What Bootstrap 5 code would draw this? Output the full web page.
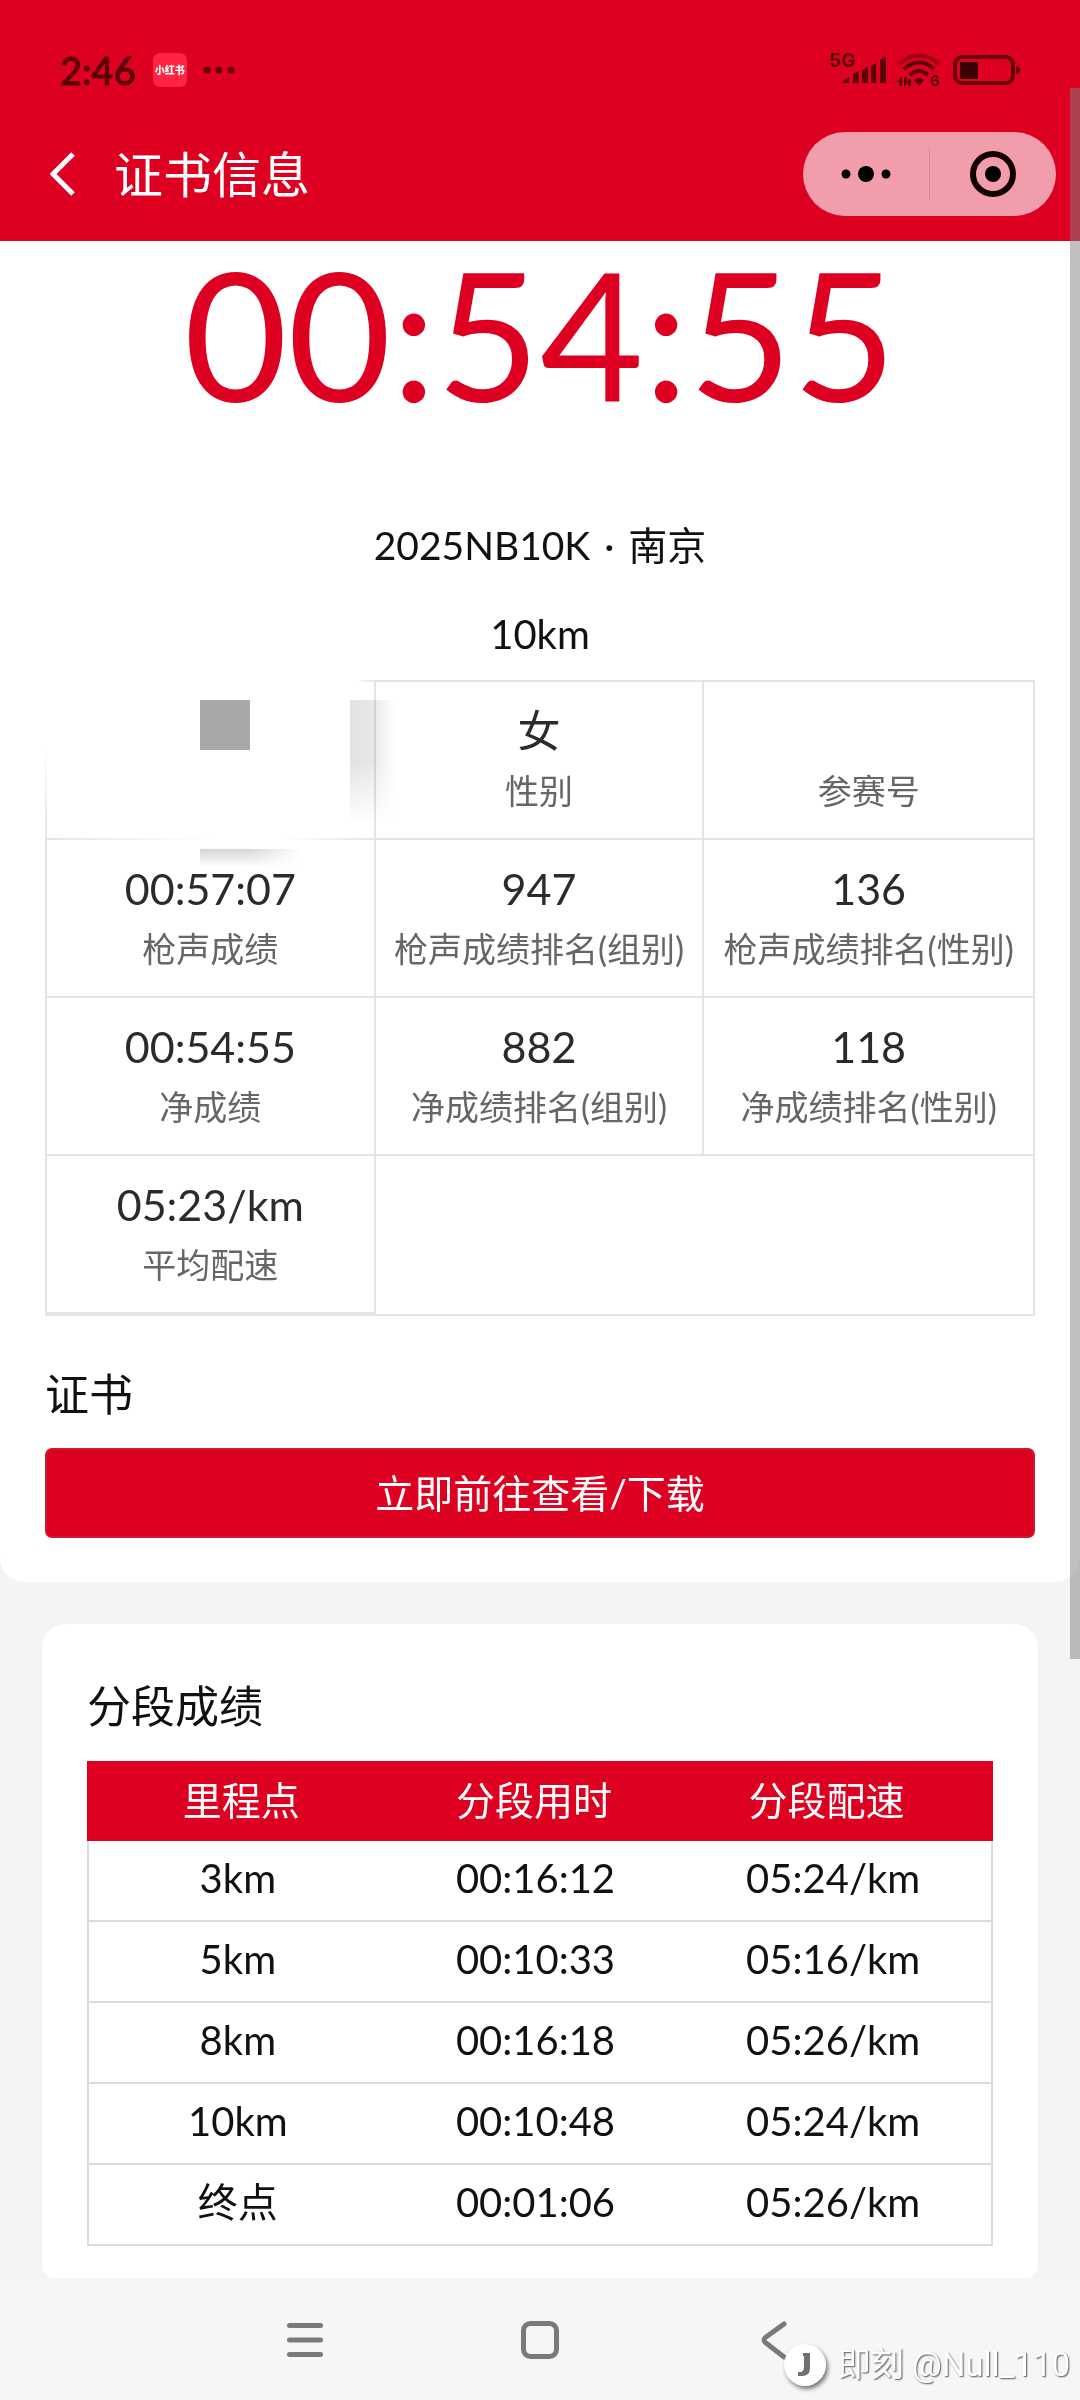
<!DOCTYPE html>
<html lang="zh-CN">
<head>
<meta charset="utf-8">
<meta name="viewport" content="width=device-width, initial-scale=1">
<title>证书信息</title>
<link rel="stylesheet" href="https://cdn.jsdelivr.net/npm/bootstrap@5.3.0/dist/css/bootstrap.min.css">
<style>
  :root { --brand: #de0021; --rule: #e4e4e4; --split-rule: #dcdcdc; }
  body { font-family: Lato, "Noto Sans CJK SC", sans-serif; background: #f4f4f4; color: #111; line-height: 60px; font-size: 40px; overflow-x: hidden; }
  svg { display: block; flex: none; }
  .top-area { background: var(--brand); height: 241px; }
  .status-bar { padding: 40px 58px 0 60px; height: 100px; color: #5c0008; }
  .status-time { font-size: 38px; font-weight: 500; -webkit-text-stroke: 1px #5c0008; margin-right: 17px; }
  .status-svg-text { font-family: Inter, sans-serif; font-weight: 700; fill: #5c0008; }
  .app-icon { width: 34px; height: 34px; border-radius: 7px; background: #ff2442; color: #fff; font-size: 10px; line-height: 34px; font-weight: 900; text-align: center; white-space: nowrap; }
  .title-bar { height: 148px; padding: 0 24px 0 50px; }
  .title-bar h1 { font-size: 49px; line-height: 60px; font-weight: 400; color: #fff; margin: 0 0 0 39px; }
  .icon-btn { border: 0; background: none; padding: 0; }
  .capsule { width: 253px; height: 84px; border-radius: 42px; background: #f29dab; }
  .capsule .icon-btn { flex: 1; height: 100%; }
  .capsule-line { width: 1px; height: 52px; background: #dc8595; }
  .result-panel { background: #fff; border-radius: 0 0 24px 24px; padding: 0 45px 44px; }
  .finish-time { color: var(--brand); font-size: 179px; line-height: 184px; }
  .race-name { font-size: 39px; margin-top: 90px; }
  .race-type { margin-top: 29px; }
  .stat-grid { border: 2px solid var(--rule); margin-top: 16px; }
  .stat-cell { height: 158px; padding-top: 19px; border-right: 2px solid var(--rule); border-bottom: 2px solid var(--rule); text-align: center; white-space: nowrap; }
  .stat-cell.edge { border-right: 0; }
  .stat-value { font-size: 43px; color: #2b2b2b; height: 60px; }
  .stat-label { font-size: 34px; color: #666; height: 60px; }
  .section-title { font-size: 44px; line-height: 60px; font-weight: 400; margin: 0; color: #111; }
  .btn-brand { background: var(--brand); border: 2px solid #cc1a30; border-radius: 7px; color: #fff; font-size: 39px; line-height: 60px; padding: 13px 0; }
  .btn-brand:hover { background: #c4001d; color: #fff; }
  .split-card { border-radius: 24px 24px 12px 12px; background: #fff; margin: 42px 42px 0; padding: 52px 45px 32px; }
  .split-table { border: 2px solid var(--split-rule); border-top: 0; margin-top: 25px; }
  .split-table th, .split-table td { width: 33%; text-align: center; font-weight: 400; }
  .split-table th { width: 33.33%; }
  .split-table thead tr { background: var(--brand); color: #fff; font-size: 39px; padding: 8px 20px 10px 8px; margin: 0 -2px; }
  .split-table tbody tr { height: 81px; padding: 6px 0 13px; border-bottom: 2px solid var(--split-rule); }
  .split-table tbody tr:last-child { height: 79px; border-bottom: 0; }
  .sys-nav { background: #f6f6f6; height: 124px; gap: 187px; }
  .veil, .veil-block, .veil-right, .veil-below { position: absolute; }
  .veil { left: -2px; top: -2px; width: 330px; height: 160px; background: linear-gradient(to bottom, #fff 40%, rgba(255,255,255,0)) left / 4px 100% no-repeat, linear-gradient(to right, #fff 94%, rgba(255,255,255,0)) top / 100% 4px no-repeat, linear-gradient(to right, rgba(255,255,255,0), #fff 50%, #fff 72%, rgba(255,255,255,0)) bottom / 100% 2px no-repeat; }
  .veil-block { left: 153px; top: 18px; width: 50px; height: 50px; background: #a8a8a8; }
  .veil-right { left: 303px; top: 18px; width: 46px; height: 122px; background: linear-gradient(to bottom, rgba(255,255,255,0) 50%, #fff), linear-gradient(to right, #e2e2e2, #e8e8e8 50%, #fff); mix-blend-mode: multiply; }
  .veil-below { left: 153px; top: 167px; width: 100px; height: 18px; background: linear-gradient(to bottom, rgba(255,255,255,0), #fff), linear-gradient(to right, #d4d4d4, #d6d6d6 50%, #fff); }
  .scroll-thumb { position: absolute; right: 0; top: 88px; width: 10px; height: 1571px; background: rgba(128,128,128,.5); }
  .watermark { position: absolute; right: 10px; bottom: 10px; color: #fff; font: 33px/54px Roboto, "Noto Sans CJK SC", sans-serif; text-shadow: 1px 1px 1px #777, 1px 1px 2px #999; }
  .watermark svg { filter: drop-shadow(2px 3px 2px #777); margin-right: 11px; }
</style>
<script src="https://cdn.jsdelivr.net/npm/bootstrap@5.3.0/dist/js/bootstrap.bundle.min.js"></script>
</head>
<body>
<div class="position-relative">
  <header class="top-area">
    <div class="status-bar d-flex align-items-center">
      <span class="status-time">2:46</span>
      <span class="app-icon">小红书</span>
      <svg class="ms-3" width="34" height="8" fill="#6a0008"><circle cx="4" cy="4" r="3.5"/><circle cx="16" cy="4" r="3.5"/><circle cx="28" cy="4" r="3.5"/></svg>
      <svg class="ms-auto" width="194" height="44" viewBox="0 -4 194 44" aria-label="5G Wi-Fi 6">
        <text class="status-svg-text" x="1" y="15" font-size="19">5G</text>
        <path fill="#5c0008" d="M15 31v-2l6-4v6zM25 31v-9l6-3v12zM34 31v-13l6-3v16zM43 31v-17l5-3v20zM52 31V8l6-4v27z"/>
        <g fill="none" stroke-width="4">
          <path stroke="#a00014" d="M71 12Q91-5 111 12"/>
          <path stroke="#5c0008" d="M76 17q15-13 30 0M82 23q9-8 18 0"/>
        </g>
        <path fill="#5c0008" d="M86 28q5-4 10 0l-5 6zM74 24v10h-3v-4h-2zM76 35V25h3v4h2zM80 27h3v7h-3z"/>
        <text class="status-svg-text" x="102" y="34" font-size="15">6</text>
        <rect x="127" y="5" width="58" height="26" rx="7" fill="none" stroke="#6a0008" stroke-width="4"/>
        <rect x="132" y="10" width="18" height="17" rx="1" fill="#3c0006"/>
        <path fill="#5c0008" d="M188 14q4 0 4 4t-4 4z"/>
      </svg>
    </div>
    <div class="title-bar d-flex align-items-center">
      <button class="icon-btn" type="button" aria-label="返回"><svg width="25" height="44" viewBox="0 0 25 44"><path d="M23 2 3 22 23 42" fill="none" stroke="#fff" stroke-width="5"/></svg></button>
      <h1>证书信息</h1>
      <div class="capsule d-flex align-items-center ms-auto">
        <button class="icon-btn d-flex justify-content-center align-items-center" type="button" aria-label="更多"><svg width="50" height="16"><circle cx="5" cy="8" r="4.5"/><circle cx="25" cy="8" r="8"/><circle cx="45" cy="8" r="4.5"/></svg></button>
        <span class="capsule-line"></span>
        <button class="icon-btn d-flex justify-content-center align-items-center" type="button" aria-label="关闭"><svg width="48" height="48"><circle cx="24" cy="24" r="20" fill="none" stroke="#100" stroke-width="6"/><circle cx="24" cy="24" r="8"/></svg></button>
      </div>
    </div>
  </header>

  <main>
    <section class="result-panel">
      <div class="finish-time text-center">00:54:55</div>
      <div class="race-name text-center">2025NB10K <span class="mx-1">·</span> 南京</div>
      <div class="race-type text-center">10km</div>

      <div class="stat-grid row row-cols-3 g-0 position-relative">
        <div class="stat-cell"></div>
        <div class="stat-cell"><div class="stat-value">女</div><div class="stat-label">性别</div></div>
        <div class="stat-cell edge"><div class="stat-value"></div><div class="stat-label">参赛号</div></div>
        <div class="stat-cell"><div class="stat-value">00:57:07</div><div class="stat-label">枪声成绩</div></div>
        <div class="stat-cell"><div class="stat-value">947</div><div class="stat-label">枪声成绩排名(组别)</div></div>
        <div class="stat-cell edge"><div class="stat-value">136</div><div class="stat-label">枪声成绩排名(性别)</div></div>
        <div class="stat-cell"><div class="stat-value">00:54:55</div><div class="stat-label">净成绩</div></div>
        <div class="stat-cell"><div class="stat-value">882</div><div class="stat-label">净成绩排名(组别)</div></div>
        <div class="stat-cell edge"><div class="stat-value">118</div><div class="stat-label">净成绩排名(性别)</div></div>
        <div class="stat-cell"><div class="stat-value">05:23/km</div><div class="stat-label">平均配速</div></div>
        <span class="veil"></span><span class="veil-block"></span><span class="veil-right"></span><span class="veil-below"></span>
      </div>

      <h2 class="section-title mt-5">证书</h2>
      <button class="btn btn-brand w-100 mt-4" type="button">立即前往查看/下载</button>
    </section>

    <section class="split-card">
      <h2 class="section-title">分段成绩</h2>
      <table class="split-table d-block">
        <thead class="d-block"><tr class="d-flex"><th scope="col">里程点</th><th scope="col">分段用时</th><th scope="col">分段配速</th></tr></thead>
        <tbody class="d-block">
          <tr class="d-flex"><td>3km</td><td>00:16:12</td><td>05:24/km</td></tr>
          <tr class="d-flex"><td>5km</td><td>00:10:33</td><td>05:16/km</td></tr>
          <tr class="d-flex"><td>8km</td><td>00:16:18</td><td>05:26/km</td></tr>
          <tr class="d-flex"><td>10km</td><td>00:10:48</td><td>05:24/km</td></tr>
          <tr class="d-flex"><td>终点</td><td>00:01:06</td><td>05:26/km</td></tr>
        </tbody>
      </table>
    </section>
  </main>

  <nav class="sys-nav d-flex justify-content-center align-items-center">
    <button class="icon-btn" type="button" aria-label="最近任务"><svg width="48" height="48" viewBox="0 0 48 48"><path d="M8.500 9.500h31M8.500 24h31M8.500 38.500h31" stroke="#7a7a7a" stroke-width="5" stroke-linecap="round"/></svg></button>
    <button class="icon-btn" type="button" aria-label="主屏幕"><svg width="48" height="48" viewBox="0 0 48 48"><rect x="7.500" y="7.500" width="33" height="33" rx="7" fill="none" stroke="#7a7a7a" stroke-width="5"/></svg></button>
    <button class="icon-btn" type="button" aria-label="返回"><svg width="48" height="48" viewBox="0 0 48 48"><path d="M33 8 15 21q-4 3 0 6l18 14" fill="none" stroke="#7a7a7a" stroke-width="5" stroke-linecap="round"/></svg></button>
  </nav>

  <div class="scroll-thumb"></div>
  <div class="watermark d-flex align-items-center">
    <svg width="44" height="44" viewBox="0 0 44 44"><circle cx="22" cy="22" r="21" fill="#fff"/><path d="M20 10h7v15q0 8-8 8h-4v-4h2q4 0 4-5V13h-1z" fill="#707070"/></svg>
    <span>即刻 @Null_110</span>
  </div>
</div>
</body>
</html>
